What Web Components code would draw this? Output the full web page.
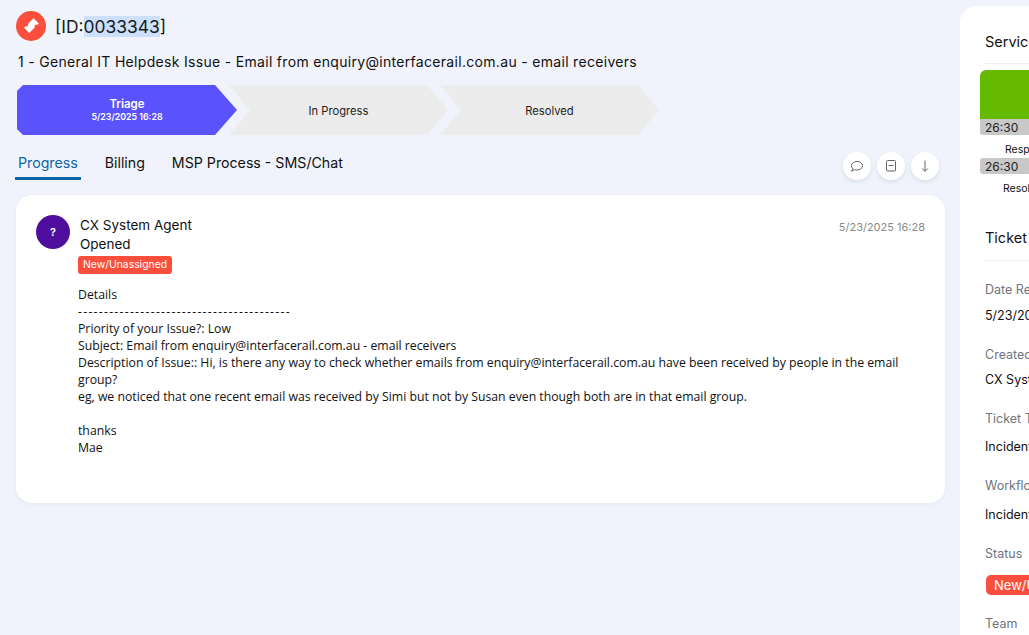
<!DOCTYPE html>
<html>
<head>
<meta charset="utf-8">
<title>Ticket 0033343</title>
<style>
html, body { margin: 0; height: 100%; overflow: hidden; }
body { background: #f0f3fb; font-family: Inter, "Liberation Sans", sans-serif; color: #111; }
ticket-page { height: 635px; }
.rule { letter-spacing: 1.25px; }
</style>
</head>
<body>
<ticket-page>
	<ticket-header slot="main" ticket-id="0033343" subject="1 - General IT Helpdesk Issue - Email from enquiry@interfacerail.com.au - email receivers"></ticket-header>
	<stage-bar slot="main">
		<stage-step active label="Triage" date="5/23/2025 16:28"></stage-step>
		<stage-step label="In Progress"></stage-step>
		<stage-step label="Resolved"></stage-step>
	</stage-bar>
	<tab-row slot="main">
		<tab-item active>Progress</tab-item>
		<tab-item>Billing</tab-item>
		<tab-item>MSP Process - SMS/Chat</tab-item>
		<round-button slot="actions" icon="comment"></round-button>
		<round-button slot="actions" icon="collapse"></round-button>
		<round-button slot="actions" icon="down"></round-button>
	</tab-row>
	<activity-card slot="main" who="CX System Agent" what="Opened" when="5/23/2025 16:28" status="New/Unassigned">Details
<span class="rule">-----------------------------------------</span>
Priority of your Issue?: Low
Subject: Email from enquiry@interfacerail.com.au - email receivers
Description of Issue:: Hi, is there any way to check whether emails from enquiry@interfacerail.com.au have been received by people in the email group?
eg, we noticed that one recent email was received by Simi but not by Susan even though both are in that email group.

thanks
Mae</activity-card>

	<side-panel slot="side">
		<section-title>Service Level Agreement</section-title>
		<sla-bars></sla-bars>
		<section-title ticket>Ticket Information</section-title>
		<info-field style="height:65px;--gap:8px" label="Date Received" value="5/23/2025 16:28"></info-field>
		<info-field style="height:64px;--gap:7px" label="Created By" value="CX System Agent"></info-field>
		<info-field style="height:67px;--gap:10px" label="Ticket Type" value="Incident"></info-field>
		<info-field style="height:68px;--gap:11px" label="Workflow" value="Incident Workflow"></info-field>
		<info-field style="height:70px" label="Status" badge value="New/Unassigned"></info-field>
		<info-field label="Team" value=""></info-field>
	</side-panel>
</ticket-page>

<script>
class TicketPage extends HTMLElement {
	connectedCallback() {
		this.attachShadow({ mode: 'open' })
		this.shadowRoot.innerHTML = `
<style>
:host { display: flex; align-items: flex-start; width: 1029px; overflow: hidden; }
.main { width: 960px; flex: none; padding: 11px 15px 0 16px; box-sizing: border-box; }
.side { width: 300px; flex: none; margin-top: 6px; }
</style>
<div class="main"><slot name="main"></slot></div>
<div class="side"><slot name="side"></slot></div>`
	}
}

class TicketHeader extends HTMLElement {
	connectedCallback() {
		this.attachShadow({ mode: 'open' })
		this.shadowRoot.innerHTML = `
<style>
:host { display: block; }
.top { display: flex; align-items: center; gap: 9px; height: 30px; }
.logo { width: 30px; height: 30px; border-radius: 50%; background: #fb4f3e; display: flex; align-items: center; justify-content: center; flex: none; }
.id { font-size: 17.4px; color: #1a1a1a; }
.id span { background: #cce0fb; }
.subject { margin: 10px 0 0 2px; font-size: 14px; line-height: 21px; color: #111; letter-spacing: 0.31px; white-space: nowrap; }
</style>
<div class="top">
	<div class="logo">
		<svg width="20" height="20" viewBox="0 0 18 18"><path d="M11.3 2 16 6.7 14.6 8.100 A1.500 1.500 0 0 0 12.500 10.200 L7.400 15.300 2.700 10.600 4.100 9.200 A1.500 1.500 0 0 0 6.200 7.100 Z" fill="#fff"/></svg>
	</div>
	<div class="id">[ID:<span>${this.getAttribute('ticket-id')}</span>]</div>
</div>
<p class="subject">${this.getAttribute('subject')}</p>`
	}
}

class StageBar extends HTMLElement {
	connectedCallback() {
		this.attachShadow({ mode: 'open' })
		this.shadowRoot.innerHTML = `
<style>
:host { display: flex; margin: 13px 0 0 1px; height: 50px; }
::slotted(stage-step:not(:first-child)) { margin-left: -8px; }
</style>
<slot></slot>`
	}
}

class StageStep extends HTMLElement {
	connectedCallback() {
		this.attachShadow({ mode: 'open' })
		const date = this.getAttribute('date')
		this.shadowRoot.innerHTML = `
<style>
:host { display: block; width: 219px; height: 50px; flex: none; }
:host([active]) { width: 220px; }
.step {
	height: 100%; box-sizing: border-box; padding-top: 1px; background: #ececec; color: #1c1c1c; font-size: 11.2px;
	display: flex; flex-direction: column; align-items: center; justify-content: center; text-align: center;
	clip-path: polygon(0 0, calc(100% - 21px) 0, 100% 50%, calc(100% - 21px) 100%, 0 100%, 21px 50%);
}
:host([active]) .step {
	background: #5a53fd; color: #fff; font-weight: 600;
	clip-path: polygon(6px 0, calc(100% - 22px) 0, 100% 50%, calc(100% - 22px) 100%, 6px 100%, 0 calc(100% - 6px), 0 6px);
}
:host([active]) .label { font-size: 11.5px; line-height: 13px; }
.date { font-size: 8.8px; line-height: 12px; }
</style>
<div class="step"><div class="label">${this.getAttribute('label')}</div>${date ? `<div class="date">${date}</div>` : ''}</div>`
	}
}

class TabRow extends HTMLElement {
	connectedCallback() {
		this.attachShadow({ mode: 'open' })
		this.shadowRoot.innerHTML = `
<style>
:host { display: flex; align-items: flex-start; margin-top: 17px; height: 43px; }
.tabs { display: flex; gap: 21px; flex: 1; margin-left: -1px; }
.actions { display: flex; gap: 6px; margin-right: 6px; }
</style>
<div class="tabs"><slot></slot></div>
<div class="actions"><slot name="actions"></slot></div>`
	}
}

class TabItem extends HTMLElement {
	connectedCallback() {
		this.attachShadow({ mode: 'open' })
		this.shadowRoot.innerHTML = `
<style>
:host { display: block; font-size: 14.2px; line-height: 22px; padding: 0 3px 3px; color: #111; border-bottom: 3px solid transparent; white-space: nowrap; }
:host([active]) { color: #0f65a5; border-bottom-color: #0f65a5; }
</style>
<slot></slot>`
	}
}

class RoundButton extends HTMLElement {
	connectedCallback() {
		this.attachShadow({ mode: 'open' })
		const icons = {
			comment: '<path d="M2.500 13.200 3.900 10.700C3 9.900 2.500 8.900 2.500 7.800 2.500 5.300 5 3.400 8 3.400S13.500 5.300 13.500 7.800 11 12 8 12C7.100 12 6.200 11.900 5.400 11.600Z"/>',
			collapse: '<rect x="3.500" y="2.500" width="9" height="10.500" rx="1"/><path d="M5.500 7.500H10.500"/><path d="M4 12.700H12" stroke="#aaa"/>',
			down: '<path d="M8 2.500V13.300M5.200 10.500 8 13.300 10.800 10.500"/>'
		}
		this.shadowRoot.innerHTML = `
<style>
:host { display: flex; width: 28px; height: 28px; border-radius: 50%; background: #fff; box-shadow: 0 2px 4px rgba(60, 70, 100, 0.12); align-items: center; justify-content: center; }
svg { fill: none; stroke: #666; stroke-width: 1; }
</style>
<svg width="16" height="16" viewBox="0 0 16 16">${icons[this.getAttribute('icon')]}</svg>`
	}
}

class ActivityCard extends HTMLElement {
	connectedCallback() {
		this.attachShadow({ mode: 'open' })
		this.shadowRoot.innerHTML = `
<style>
:host { display: block; background: #fff; border-radius: 16px; height: 308px; box-sizing: border-box; padding: 20px 20px 0 20px; box-shadow: 0 1px 4px rgba(60, 70, 100, 0.06); }
.head { display: flex; gap: 10px; }
.avatar { width: 34px; height: 34px; border-radius: 50%; background: #4f0e9e; color: #fff; font-size: 11px; font-weight: 600; display: flex; align-items: center; justify-content: center; flex: none; }
.who { flex: 1; padding-top: 1px; font-size: 13.5px; line-height: 19px; color: #111; }
.what { display: block; }
.when { font-size: 11px; line-height: 16px; color: #8a8a8a; margin-top: 4px; }
.badge { margin: 2px 0 0 42px; width: fit-content; background: #fb4f3e; color: #fff; font-size: 10.4px; line-height: 18px; height: 18px; padding: 0 5px; border-radius: 3px; }
.body { margin: 12px 0 0 42px; font-family: "Open Sans", "Noto Sans", sans-serif; font-size: 12.25px; line-height: 17px; color: #111; white-space: pre-wrap; }
</style>
<div class="head">
	<div class="avatar">?</div>
	<div class="who">${this.getAttribute('who')}<span class="what">${this.getAttribute('what')}</span></div>
	<div class="when">${this.getAttribute('when')}</div>
</div>
<div class="badge">${this.getAttribute('status')}</div>
<div class="body"><slot></slot></div>`
	}
}

class SidePanel extends HTMLElement {
	connectedCallback() {
		this.attachShadow({ mode: 'open' })
		this.shadowRoot.innerHTML = `
<style>
:host { display: block; background: #fff; border-radius: 16px 0 0 0; height: 640px; padding: 0 0 0 25px; box-sizing: border-box; overflow: hidden; }
</style>
<slot></slot>`
	}
}

class SectionTitle extends HTMLElement {
	connectedCallback() {
		this.attachShadow({ mode: 'open' })
		this.shadowRoot.innerHTML = `
<style>
:host { display: block; font-size: 14.5px; line-height: 22px; color: #111; padding: 25px 0 10px; border-bottom: 1px solid #f0f0f0; white-space: nowrap; }
:host([ticket]) { padding: 30px 0 11px; }
</style>
<slot></slot>`
	}
}

class SlaBars extends HTMLElement {
	connectedCallback() {
		this.attachShadow({ mode: 'open' })
		this.shadowRoot.innerHTML = `
<style>
:host { display: block; margin: 6px 0 0 -5px; width: 280px; }
.green { height: 49px; background: #65ba00; border-radius: 6px 6px 0 0; }
.time { height: 16px; background: #c8c8c8; font-size: 12px; line-height: 17px; padding-left: 5px; color: #222; border-radius: 0 0 0 3px; }
.cap { font-size: 10.5px; line-height: 14px; height: 15px; padding-top: 8px; white-space: nowrap; }
</style>
<div class="green"></div>
<div class="time">26:30</div>
<div class="cap" style="padding-left:25px">Response Time</div>
<div class="time" style="border-radius:3px 0 0 3px">26:30</div>
<div class="cap" style="padding-left:23px">Resolution Time</div>`
	}
}

class InfoField extends HTMLElement {
	connectedCallback() {
		this.attachShadow({ mode: 'open' })
		const val = this.getAttribute('value')
		this.shadowRoot.innerHTML = `
<style>
:host { display: block; height: 68px; white-space: nowrap; }
.label { font-size: 12.5px; line-height: 18px; padding-top: 20px; color: #6f7480; }
.value { font-size: 12.5px; line-height: 18px; margin-top: var(--gap, 8px); color: #111; }
.badge { display: inline-block; background: #fb4f3e; color: #fff; font-size: 13px; line-height: 20px; padding: 0 8px; border-radius: 5px; margin: 12px 0 0 1px; }
</style>
<div class="label">${this.getAttribute('label')}</div>
${this.hasAttribute('badge') ? `<div class="badge">${val}</div>` : `<div class="value">${val}</div>`}`
	}
}

customElements.define('ticket-page', TicketPage)
customElements.define('ticket-header', TicketHeader)
customElements.define('stage-bar', StageBar)
customElements.define('stage-step', StageStep)
customElements.define('tab-row', TabRow)
customElements.define('tab-item', TabItem)
customElements.define('round-button', RoundButton)
customElements.define('activity-card', ActivityCard)
customElements.define('side-panel', SidePanel)
customElements.define('section-title', SectionTitle)
customElements.define('sla-bars', SlaBars)
customElements.define('info-field', InfoField)
</script>
</body>
</html>
